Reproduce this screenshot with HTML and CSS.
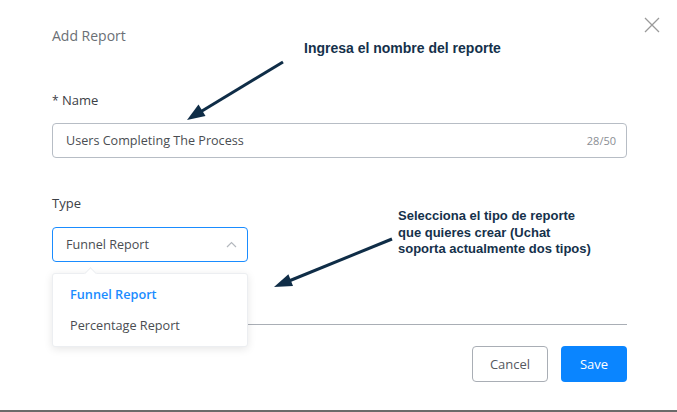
FILE: index.html
```html
<!DOCTYPE html>
<html lang="en">
<head>
    <meta charset="UTF-8">
    <title>Add Report</title>
    <link rel="stylesheet" href="styles.css">
</head>
<body>
    <div class="modal">
        <div class="modal-header">
            <h3 class="modal-title">Add Report</h3>
            <button class="close-btn" aria-label="Close">
                <svg width="16" height="16" viewBox="0 0 16 16">
                    <path d="M1 1 L15 15 M15 1 L1 15" stroke="#9a9a9a" stroke-width="1.3" fill="none"/>
                </svg>
            </button>
        </div>

        <div class="field name-field">
            <label class="field-label"><span class="required">*</span> Name</label>
            <div class="text-input">
                <span class="input-value">Users Completing The Process</span>
                <span class="counter">28/50</span>
            </div>
        </div>

        <div class="field type-field">
            <label class="field-label">Type</label>
            <div class="select-wrap">
                <div class="select-box">
                    <span class="input-value">Funnel Report</span>
                    <svg class="chevron" width="11" height="7" viewBox="0 0 11 7">
                        <path d="M1 6 L5.5 1.5 L10 6" stroke="#b4b8be" stroke-width="1.2" fill="none"/>
                    </svg>
                </div>
                <div class="dropdown">
                    <div class="dropdown-item active">Funnel Report</div>
                    <div class="dropdown-item">Percentage Report</div>
                </div>
            </div>
        </div>

        <div class="divider"></div>

        <div class="modal-footer">
            <button class="btn btn-cancel">Cancel</button>
            <button class="btn btn-save">Save</button>
        </div>
    </div>

    <!-- annotations drawn on top of the screenshot -->
    <div class="note note-name">Ingresa el nombre del reporte</div>
    <div class="note note-type">Selecciona el tipo de reporte<br>que quieres crear (Uchat<br>soporta actualmente dos tipos)</div>
    <svg class="arrows" width="677" height="412" viewBox="0 0 677 412">
        <line x1="283" y1="62" x2="197" y2="114" stroke="#0f2d47" stroke-width="3"/>
        <polygon points="187,120 198.5,104.5 205.5,116" fill="#0f2d47"/>
        <line x1="392" y1="239" x2="284" y2="283" stroke="#0f2d47" stroke-width="3"/>
        <polygon points="274,287 288.4,274.2 293,286" fill="#0f2d47"/>
    </svg>
</body>
</html>
```

FILE: styles.css
```css
* {
    margin: 0;
    padding: 0;
    box-sizing: border-box;
}

body {
    font-family: "Open Sans", "Liberation Sans", sans-serif;
    background: #fff;
    width: 677px;
    height: 412px;
    overflow: hidden;
    position: relative;
}

.modal {
    height: 412px;
    padding: 26px 50px 0 52px;
    border-bottom: 2px solid #6a6a6a;
    display: flex;
    flex-direction: column;
}

.modal-header {
    height: 20px;
}

.modal-title {
    font-size: 14px;
    font-weight: 400;
    line-height: 20px;
    color: #6b6f75;
}

.close-btn {
    position: absolute;
    top: 17px;
    right: 17px;
    width: 16px;
    height: 16px;
    border: none;
    background: transparent;
    display: flex;
}

.field {
    display: flex;
    flex-direction: column;
}

.name-field {
    margin-top: 44px;
    gap: 13px;
}

.type-field {
    margin-top: 35px;
    gap: 14px;
}

.field-label {
    height: 20px;
    font-size: 13px;
    line-height: 20px;
    color: #3c4046;
}

.required {
    font-size: 12px;
    line-height: 1;
    color: #3c4046;
}

.text-input {
    height: 35px;
    border: 1px solid #b7bdc5;
    border-radius: 4px;
    padding: 0 10px 0 13px;
    display: flex;
    align-items: center;
    justify-content: space-between;
}

.input-value {
    font-size: 12.6px;
    color: #4a4d52;
}

.counter {
    font-size: 11px;
    color: #8a8e94;
}

.select-wrap {
    position: relative;
    width: 196px;
}

.select-box {
    height: 35px;
    border: 1px solid #1a8cff;
    border-radius: 4px;
    padding: 0 10px 0 13px;
    display: flex;
    align-items: center;
    justify-content: space-between;
}

.dropdown {
    position: absolute;
    top: 46px;
    left: 0;
    width: 196px;
    padding: 5px 0;
    background: #fff;
    border-radius: 3px;
    border: 1px solid #eceef1;
    box-shadow: 0 2px 8px rgba(0, 0, 0, 0.1);
    z-index: 2;
}

.dropdown::before {
    content: "";
    position: absolute;
    top: -5px;
    left: 33px;
    width: 8px;
    height: 8px;
    background: #fff;
    border-left: 1px solid #eceef1;
    border-top: 1px solid #eceef1;
    transform: rotate(45deg);
}

.dropdown-item {
    height: 31px;
    line-height: 31px;
    padding-left: 17px;
    font-size: 12.7px;
    color: #4a4d52;
}

.dropdown-item.active {
    color: #1a8cff;
    font-weight: 600;
}

.divider {
    margin-top: 62px;
    height: 1px;
    background: #a9aeb5;
}

.modal-footer {
    margin-top: 21px;
    display: flex;
    justify-content: flex-end;
    gap: 13px;
}

.btn {
    height: 36px;
    border-radius: 4px;
    font-family: "Open Sans", "Liberation Sans", sans-serif;
    font-size: 13px;
}

.btn-cancel {
    width: 76px;
    background: #fff;
    border: 1px solid #a9aeb5;
    color: #55595f;
}

.btn-save {
    width: 66px;
    background: #0a85ff;
    border: none;
    color: #fff;
}

.note {
    position: absolute;
    font-family: "Liberation Sans", Arial, sans-serif;
    font-weight: 700;
    color: #15314b;
    z-index: 3;
}

.note-name {
    top: 40px;
    left: 304px;
    font-size: 14px;
    line-height: 16px;
}

.note-type {
    top: 208px;
    left: 398px;
    font-size: 13px;
    line-height: 16.5px;
}

.arrows {
    position: absolute;
    top: 0;
    left: 0;
    z-index: 3;
}
```
